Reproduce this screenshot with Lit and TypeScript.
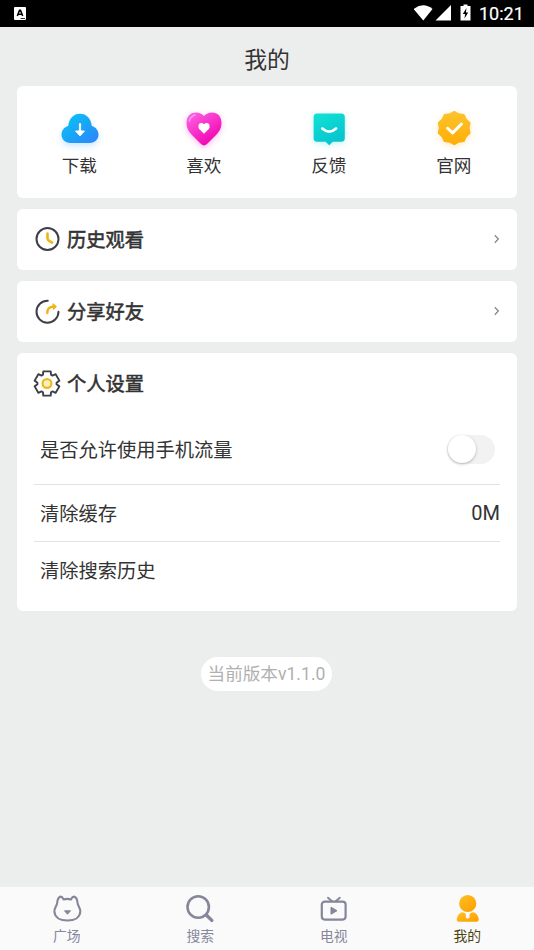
import { LitElement, html, css, svg } from "lit";
import { customElement, state } from "lit/decorators.js";
import { classMap } from "lit/directives/class-map.js";

const gearPoints = Array.from({ length: 6 }, (_, i) =>
  [[-25, 9.6], [-17, 12.7], [17, 12.7], [25, 9.6]].map(([da, r]) => {
    const a = ((i * 60 + da - 90) * Math.PI) / 180;
    return `${(13 + r * Math.cos(a)).toFixed(2)},${(13.5 + r * Math.sin(a)).toFixed(2)}`;
  }).join(" ")
).join(" ");

const badgePoints = Array.from({ length: 20 }, (_, i) => {
  const a = ((i * 18 - 90) * Math.PI) / 180;
  const r = i % 2 ? 14.4 : 16.2;
  return `${(24.2 + r * Math.cos(a)).toFixed(2)},${(24 + r * Math.sin(a)).toFixed(2)}`;
}).join(" ");

const shortcuts = [
  {
    label: "下载", tone: "blue",
    icon: svg`<defs><linearGradient id="g" x1="0" y1="0" x2="1" y2="1"><stop offset="0" stop-color="#04c9f5"/><stop offset="1" stop-color="#2f82fa"/></linearGradient></defs>
      <path fill="url(#g)" d="M15.500 39C10 39 6.500 35.300 6.500 30.500C6.500 26.300 9.300 23 13.200 21.900C14.300 14.500 18.500 9.800 25 9.800C31.500 9.800 35.800 14.500 36.800 21.900C40.700 23 43.500 26.300 43.500 30.500C43.500 35.300 40 39 34.500 39Z"/>
      <path d="M25 20V28" stroke="#fff" stroke-width="2.200" stroke-linecap="round"/><path d="M20.600 27H29.400L25 32Z" fill="#fff" stroke="#fff" stroke-width="1" stroke-linejoin="round"/>`,
  },
  {
    label: "喜欢", tone: "pink",
    icon: svg`<defs><linearGradient id="g" x1="0" y1="0" x2=".7" y2="1"><stop offset="0" stop-color="#ff68e7"/><stop offset="1" stop-color="#f000af"/></linearGradient></defs>
      <path fill="url(#g)" d="M24 41.500Q22.500 41.500 20.500 39.500L11 30Q6.500 25 6.500 19C6.500 12.500 10.500 8.500 16 8.500Q20.800 8.500 24 12Q27.200 8.500 32 8.500C37.500 8.500 41.500 12.500 41.500 19Q41.500 25 37 30L27.500 39.500Q25.500 41.500 24 41.500Z"/>
      <path d="M9.300 17Q10.500 12.500 15 11" fill="none" stroke="#ff9bef" stroke-width="1.500" stroke-linecap="round"/>
      <path fill="#fff" d="M24 29.800L19.400 25.200Q18.400 24 18.400 22.200Q18.400 19 21.300 18.900Q23 18.900 24 20.200Q25 18.900 26.700 18.900Q29.600 19 29.600 22.200Q29.600 24 28.600 25.200Z"/>`,
  },
  {
    label: "反馈", tone: "teal",
    icon: svg`<defs><linearGradient id="g" x1="0" y1="0" x2=".5" y2="1"><stop offset="0" stop-color="#12e3d3"/><stop offset="1" stop-color="#06c4d0"/></linearGradient></defs>
      <path fill="url(#g)" d="M12 9.500H36.300Q39.800 9.500 39.800 13V34.300Q39.800 37.700 36.400 37.700H27.800L24.200 41.300L20.600 37.700H12Q8.600 37.700 8.600 34.300V13Q8.600 9.500 12 9.500Z"/>
      <path d="M17.300 24.500Q24.200 30.600 31.100 24.500" fill="none" stroke="#fff" stroke-width="2.600" stroke-linecap="round"/>`,
  },
  {
    label: "官网", tone: "gold",
    icon: svg`<defs><linearGradient id="g" x1="0" y1="0" x2="0" y2="1"><stop offset="0" stop-color="#fcc42c"/><stop offset="1" stop-color="#ffae08"/></linearGradient></defs>
      <polygon fill="url(#g)" stroke="url(#g)" stroke-width="2" stroke-linejoin="round" points=${badgePoints}/>
      <path d="M17.600 24.200L22.600 28.900L31.500 20" fill="none" stroke="#fff" stroke-width="2.900" stroke-linecap="round" stroke-linejoin="round"/>`,
  },
];

const clockIcon = svg`<circle cx="13.500" cy="13" r="11" fill="none" stroke="#3d3e48" stroke-width="2"/><path d="M13.500 7.500V12.200Q13.500 13.600 14.800 14.600L18 16.600" fill="none" stroke="#efb514" stroke-width="2.600" stroke-linecap="round"/>`;
const shareIcon = svg`<path d="M13.800 2.700A11 11 0 1 0 24.500 13.800" fill="none" stroke="#3d3e48" stroke-width="2" stroke-linecap="round"/><path d="M13.300 15Q13 8.900 19.500 8.600" fill="none" stroke="#efb514" stroke-width="2.400" stroke-linecap="round"/><path d="M18.900 5.700L22.400 8.500L19.600 11.500Z" fill="#efb514" stroke="#efb514" stroke-linejoin="round"/>`;
const gearIcon = svg`<polygon points=${gearPoints} fill="none" stroke="#3d3e48" stroke-width="1.900" stroke-linejoin="round"/><circle cx="13" cy="13.500" r="4.400" fill="#fff3c4" stroke="#eeb91e" stroke-width="2.200"/>`;

const tabs = [
  { label: "广场", icon: svg`<path d="M6.200 8.500Q6.700 3.800 9 2.700Q11 2.300 12.700 5.400Q16.300 4.400 19.900 5.400Q21.600 2.300 23.600 2.700Q26 3.800 26.500 8.500C26.500 11.500 29.500 14 29.300 17.500C29 23.500 23.500 26.500 16.500 26.500C9.300 26.500 3.700 23.500 3.400 17.500C3.200 14 6.200 11.500 6.200 8.500Z" fill="none" stroke="#85869a" stroke-width="2.100" stroke-linejoin="round"/><path d="M13.500 16.800H19.500L16.500 20.200Z" fill="#85869a" stroke="#85869a" stroke-linejoin="round"/>` },
  { label: "搜索", icon: svg`<circle cx="14.200" cy="13" r="10.700" fill="none" stroke="#85869a" stroke-width="2.600"/><path d="M22.300 21L27.800 26.400" stroke="#85869a" stroke-width="3.400" stroke-linecap="round"/>` },
  { label: "电视", icon: svg`<rect x="3.800" y="7.600" width="23.800" height="18" rx="3" fill="none" stroke="#85869a" stroke-width="2.200"/><path d="M10 3.800L14 7.200M21.800 3.800L17.800 7.200" stroke="#85869a" stroke-width="2" stroke-linecap="round"/><path d="M13 13.200V20.200L19 16.700Z" fill="#85869a" stroke="#85869a" stroke-linejoin="round"/>` },
  { label: "我的", active: true, icon: svg`<defs><linearGradient id="g" x1="0" y1="0" x2=".8" y2="1"><stop offset="0" stop-color="#fbc128"/><stop offset="1" stop-color="#ffa000"/></linearGradient></defs><circle cx="16.700" cy="9.500" r="8.600" fill="url(#g)"/><path d="M10.800 18.200Q12.500 18.100 14.800 19.800V23.500L16.700 25L18.600 23.500V19.800Q21 18.100 22.700 18.200Q26.500 19.500 27.700 24.700Q28 27.700 25.500 27.800H8Q5.300 27.700 5.800 24.700Q7 19.500 10.800 18.200Z" fill="url(#g)"/>` },
];

@customElement("glyph-icon")
class GlyphIcon extends LitElement {
  static properties = { art: { attribute: false }, box: { type: Number } };
  declare art: unknown;
  declare box: number;
  static styles = css`
    :host { display: block; flex: none; }
    svg { display: block; width: 100%; height: 100%; overflow: visible; }
  `;
  render() {
    return html`<svg viewBox="0 0 ${this.box} ${this.box}">${this.art}</svg>`;
  }
}

@customElement("app-root")
class AppRoot extends LitElement {
  @state() mobileData = false;

  static styles = css`
    :host { display: flex; flex-direction: column; height: 950px; background: #eceeed; color: #333;
      font-family: Roboto, "Noto Sans CJK SC", sans-serif; font-size: 19.250px; overflow: hidden; }
    .status { flex: none; height: 26.500px; background: #000; color: #fff; display: flex; align-items: center; justify-content: space-between; padding: 0 9px 0 14px; box-sizing: border-box; }
    .app { width: 12px; height: 13px; margin-top: 1px; }
    .signals { display: flex; align-items: center; }
    .signals svg { width: 60px; height: 26px; }
    .time { font-size: 18px; line-height: 26px; width: 46px; margin-left: 5px; padding-top: 1px; -webkit-text-stroke: .2px #fff; }
    .title { flex: none; height: 59.500px; line-height: 68px; text-align: center; font-size: 22.800px; }
    .content { flex: 1; padding: 0 17px; display: flex; flex-direction: column; gap: 11px; }
    .card { background: #fff; border-radius: 6px; }
    .shortcuts { display: grid; grid-template-columns: repeat(4, 1fr); height: 111.500px; }
    .shortcut { display: flex; flex-direction: column; align-items: center; padding: 18px 1.500px 0 0; font-size: 17.600px; line-height: 28px; }
    .shortcut glyph-icon { width: 48px; height: 48px; }
    .blue { padding-right: .500px; }
    .blue glyph-icon { filter: drop-shadow(0 3px 3px #2f9bfa40); }
    .pink glyph-icon { filter: drop-shadow(0 2px 3px #f52fc450); }
    .teal glyph-icon { filter: drop-shadow(0 2px 3px #12d3d340); }
    .gold glyph-icon { filter: drop-shadow(0 2px 3px #ffb52040); }
    .head { display: flex; align-items: center; height: 61px; padding: 0 17px; gap: 6px; }
    .head glyph-icon { width: 27px; height: 27px; }
    .name { flex: 1; -webkit-text-stroke: .55px #333; }
    .arrow { width: 7px; height: 10px; }
    .settings { height: 258px; box-sizing: border-box; }
    .row { margin: 0 17px; padding-left: 6px; display: flex; align-items: center; justify-content: space-between; height: 56px; border-bottom: 1px solid #e2e2e2; }
    .row.tall { height: 69px; padding-top: 1px; }
    .row.last { border: 0; }
    .switch { width: 48px; height: 29px; border-radius: 15px; background: #f2f2f2; margin-right: 5px; display: flex; cursor: pointer; }
    .switch.on { justify-content: flex-end; background: #fbc128; }
    .knob { width: 28px; height: 28px; border-radius: 50%; background: #fff; box-shadow: 0 1px 3px #0004; margin: .5px 1px; }
    .value { font-size: 20px; }
    .version { align-self: center; margin: 35.500px 1px 0 0; width: 131px; height: 34px; line-height: 35px; border-radius: 17px; background: #fff; color: #b0b0b0; text-align: center; font-size: 17.600px; }
    .tabs { flex: none; height: 63px; background: #fafafa; display: grid; grid-template-columns: repeat(4, 1fr); }
    .tab { display: flex; flex-direction: column; align-items: center; padding-top: 7px; font-size: 13.800px; line-height: 20px; color: #85869a; }
    .tab glyph-icon { width: 32px; height: 32px; }
    .tab.active { color: #4b4310; }
  `;

  heading(icon: unknown, name: string, link = true) {
    return html`<div class="head"><glyph-icon .art=${icon} .box=${27}></glyph-icon><span class="name">${name}</span>
      ${link ? html`<svg class="arrow" viewBox="0 0 7 10"><path d="M1.800 1.300L5.300 5L1.800 8.700" fill="none" stroke="#888" stroke-width="1.300"/></svg>` : ""}</div>`;
  }

  render() {
    return html`
      <div class="status">
        <svg class="app" viewBox="0 0 12 13"><rect width="12" height="13" rx="1" fill="#fff"/><path d="M3.300 9L5.500 3.200H6.500L8.700 9M4.200 7.200H7.800" fill="none" stroke="#000" stroke-width="1.500"/><path d="M6.500 11.500H11" stroke="#000" stroke-width=".8"/></svg>
        <div class="signals">
          <svg viewBox="0 0 60 26"><path d="M-.5 9Q9.500 1.500 18.500 9L9.300 20.500Z" fill="#fff"/><path d="M37 5V20.500H21.500Z" fill="#fff"/><path d="M46.500 6H49.500V4.500H53.500V6H56.500V20.500H46.500Z" fill="#fff"/><path d="M52.500 8L48.800 14H51.100L50.500 18.500L54.200 12.500H51.900Z" fill="#000"/></svg>
          <span class="time">10:21</span>
        </div>
      </div>
      <div class="title">我的</div>
      <div class="content">
        <div class="card shortcuts">
          ${shortcuts.map((s) => html`<div class=${classMap({ shortcut: true, [s.tone]: true })}><glyph-icon .art=${s.icon} .box=${48}></glyph-icon><span>${s.label}</span></div>`)}
        </div>
        <div class="card">${this.heading(clockIcon, "历史观看")}</div>
        <div class="card">${this.heading(shareIcon, "分享好友")}</div>
        <div class="card settings">
          ${this.heading(gearIcon, "个人设置", false)}
          <div class="row tall"><span>是否允许使用手机流量</span>
            <div class=${classMap({ switch: true, on: this.mobileData })} @click=${() => (this.mobileData = !this.mobileData)}><div class="knob"></div></div></div>
          <div class="row"><span>清除缓存</span><span class="value">0M</span></div>
          <div class="row last"><span>清除搜索历史</span></div>
        </div>
        <div class="version">当前版本v1.1.0</div>
      </div>
      <div class="tabs">
        ${tabs.map((t) => html`<div class=${classMap({ tab: true, active: !!t.active })}><glyph-icon .art=${t.icon} .box=${32}></glyph-icon><span>${t.label}</span></div>`)}
      </div>`;
  }
}
